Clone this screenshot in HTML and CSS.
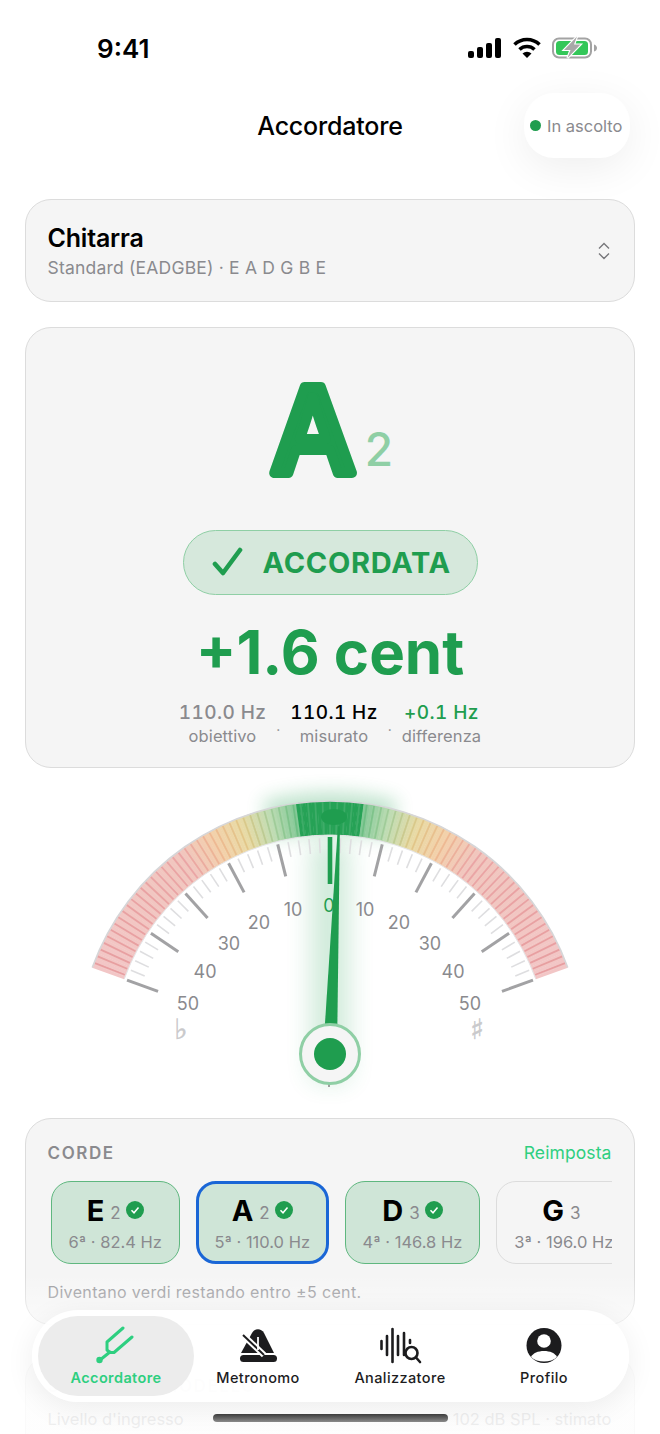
FILE: index.html
```html
<!DOCTYPE html>
<html lang="it">
<head>
	<meta charset="UTF-8">
	<title>Accordatore</title>
	<link rel="stylesheet" href="styles.css">
</head>
<body>
	<div id="phone">
		<div class="statusbar">
			<span class="clock">9:41</span>
			<svg class="status-icons" width="130" height="24" viewBox="468 36 130 24">
				<rect x="468" y="51" width="6" height="7" rx="2" fill="#000"/>
				<rect x="477" y="47" width="6" height="11" rx="2" fill="#000"/>
				<rect x="486" y="43" width="6" height="15" rx="2" fill="#000"/>
				<rect x="495" y="38" width="6" height="20" rx="2" fill="#000"/>
				<path d="M514.5 44.5a18 18 0 0 1 25 0" fill="none" stroke="#000" stroke-width="3.6"/>
				<path d="M519.5 49.5a11 11 0 0 1 15 0" fill="none" stroke="#000" stroke-width="3.6"/>
				<path d="M522.5 53.5a6.5 6.5 0 0 1 9 0L527 58z" fill="#000"/>
				<rect x="553" y="38.5" width="38" height="19" rx="6" fill="none" stroke="#a3a3a3" stroke-width="2"/>
				<rect x="556" y="41" width="32" height="14" rx="3.5" fill="#34c759"/>
				<path d="M594 44.500c2 .5 3 2 3 3.500s-1 3-3 3.500z" fill="#a3a3a3"/>
				<path d="M577 36.500l-13 13.500h6.500l-3 8 13-13.500h-6.500z" fill="#a8a8a8" stroke="#fff" stroke-width="2.200" paint-order="stroke"/>
			</svg>
		</div>

		<div class="topbar">
			<span></span>
			<h1>Accordatore</h1>
			<div class="listening"><i></i>In ascolto</div>
		</div>

		<div class="content">
			<div class="card instrument">
				<div>
					<div class="instrument-name">Chitarra</div>
					<div class="instrument-sub">Standard (EADGBE) · E A D G B E</div>
				</div>
				<svg width="16" height="20" viewBox="0 0 16 20"><path d="M3 7.500L8 2.500l5 5M3 12.500l5 5 5-5" fill="none" stroke="#77777b" stroke-width="1.400"/></svg>
			</div>

			<div class="card reading">
				<svg class="note" width="170" height="155" viewBox="0 0 170 155">
					<text class="note-letter" x="62" y="123.500" text-anchor="middle">A</text>
					<text class="note-octave" x="128" y="117" text-anchor="middle">2</text>
				</svg>
				<div class="badge">
					<svg width="32" height="30" viewBox="0 0 32 30"><path d="M3 17l8 9L28 3" fill="none" stroke="#1f9d4f" stroke-width="4.600" stroke-linecap="round" stroke-linejoin="round"/></svg>
					ACCORDATA
				</div>
				<div class="cents">+1.6 cent</div>
				<div class="freqs">
					<div class="freq"><b>110.0 Hz</b><span>obiettivo</span></div>
					<i>·</i>
					<div class="freq now"><b>110.1 Hz</b><span>misurato</span></div>
					<i>·</i>
					<div class="freq diff"><b>+0.1 Hz</b><span>differenza</span></div>
				</div>
			</div>

			<svg id="gauge" width="610" height="350" viewBox="25 768 610 350">
				<g id="glow"></g>
				<g id="band"></g>
				<g id="ticks"></g>
				<g class="gauge-labels">
					<text x="188" y="1010">50</text><text x="205" y="978">40</text>
					<text x="229" y="950">30</text><text x="259" y="929">20</text>
					<text x="293" y="916">10</text><text class="zero" x="329" y="912">0</text>
					<text x="365" y="916">10</text><text x="399" y="929">20</text>
					<text x="430" y="950">30</text><text x="453" y="978">40</text>
					<text x="470" y="1010">50</text>
					<text class="accidental" x="181" y="1039">♭</text>
					<text class="accidental" x="477" y="1039">♯</text>
				</g>
				<g id="needle"></g>
			</svg>

			<div class="card strings">
				<div class="strings-head">
					<span class="section-title">CORDE</span>
					<span class="reset">Reimposta</span>
				</div>
				<div class="chips">
					<div class="chip done">
						<div class="chip-top"><b>E</b><span>2</span><svg class="tick" width="18" height="18" viewBox="0 0 18 18"><circle cx="9" cy="9" r="9" fill="#1f9d4f"/><path d="M5.500 9.300l2.500 2.500 4.500-5.300" fill="none" stroke="#fff" stroke-width="1.500"/></svg></div>
						<div class="chip-sub">6ª · 82.4 Hz</div>
					</div>
					<div class="chip done active">
						<div class="chip-top"><b>A</b><span>2</span><svg class="tick" width="18" height="18" viewBox="0 0 18 18"><circle cx="9" cy="9" r="9" fill="#1f9d4f"/><path d="M5.500 9.300l2.500 2.500 4.500-5.300" fill="none" stroke="#fff" stroke-width="1.500"/></svg></div>
						<div class="chip-sub">5ª · 110.0 Hz</div>
					</div>
					<div class="chip done">
						<div class="chip-top"><b>D</b><span>3</span><svg class="tick" width="18" height="18" viewBox="0 0 18 18"><circle cx="9" cy="9" r="9" fill="#1f9d4f"/><path d="M5.500 9.300l2.500 2.500 4.500-5.300" fill="none" stroke="#fff" stroke-width="1.500"/></svg></div>
						<div class="chip-sub">4ª · 146.8 Hz</div>
					</div>
					<div class="chip">
						<div class="chip-top"><b>G</b><span>3</span></div>
						<div class="chip-sub">3ª · 196.0 Hz</div>
					</div>
				</div>
				<div class="strings-note">Diventano verdi restando entro ±5 cent.</div>
			</div>

			<div class="card level">
				<div class="section-title">SEGNALE E MODELLO</div>
				<div class="level-row">
					<span>Livello d'ingresso</span>
					<span>≈ 102 dB SPL · stimato</span>
				</div>
			</div>
		</div>

		<div class="fade"></div>

		<div class="tabbar">
			<div class="tab current">
				<svg width="44" height="40" viewBox="96 1326 44 40"><g fill="none" stroke="#2ecf80" stroke-width="3" stroke-linecap="round" stroke-linejoin="round"><path d="M125 1328l-16 14v8l3 2.500 4 0L134 1337"/><path d="M102 1360l10-8"/></g><circle cx="101.500" cy="1360" r="3.200" fill="#2ecf80"/></svg>
				<span>Accordatore</span>
			</div>
			<div class="tab">
				<svg width="44" height="40" viewBox="236 1326 44 40"><path d="M252 1333c3-5 9-5 12 0l10 20h-33z" fill="#1c1c1e"/><rect x="240" y="1355" width="37" height="7" rx="3.500" fill="#1c1c1e"/><path d="M243 1335l21 20" stroke="#fff" stroke-width="6"/><path d="M243 1335l21 20" stroke="#1c1c1e" stroke-width="2"/><path d="M258 1337v13" stroke="#fff" stroke-width="1.800"/></svg>
				<span>Metronomo</span>
			</div>
			<div class="tab">
				<svg width="44" height="40" viewBox="384 1326 44 40"><g fill="none" stroke="#1c1c1e" stroke-width="2.600" stroke-linecap="round"><path d="M387.500 1341v8M393 1336v19M398.500 1329v33M404 1336v19M410 1333v22M416 1340v3"/><circle cx="417.500" cy="1353" r="6"/><path d="M422 1357.500l4 4.500"/></g></svg>
				<span>Analizzatore</span>
			</div>
			<div class="tab">
				<svg width="44" height="40" viewBox="523 1326 44 40"><circle cx="545" cy="1345.500" r="17.500" fill="#1c1c1e"/><circle cx="545" cy="1341" r="6.800" fill="#fff"/><path d="M532 1357c2-4 7-6 13-6s11 2 13 6c-3 3-8 4.500-13 4.500s-10-1.500-13-4.500z" fill="#fff"/></svg>
				<span>Profilo</span>
			</div>
		</div>
		<div class="home-bar"></div>
	</div>
	<script src="gauge.js"></script>
</body>
</html>
```

FILE: styles.css
```css
*{
	margin: 0;
	padding: 0;
	box-sizing: border-box;
}
body{
	background: #fff;
	font-family: Inter, "Noto Sans", sans-serif;
	color: #000;
}
#phone{
	width: 660px;
	height: 1434px;
	position: relative;
	overflow: hidden;
	background: #fff;
}
/*status bar*/
.statusbar{
	height: 93px;
	padding: 36px 62px 0 97px;
	display: flex;
	justify-content: space-between;
	align-items: flex-start;
}
.clock{
	font-size: 26px;
	font-weight: 600;
	line-height: 26px;
}
/*top bar*/
.topbar{
	height: 65px;
	padding: 0 30px;
	display: grid;
	grid-template-columns: 1fr auto 1fr;
	align-items: center;
}
.topbar h1{
	font-size: 25px;
	font-weight: 500;
	letter-spacing: -0.2px;
}
.listening{
	justify-self: end;
	width: 106px;
	height: 65px;
	padding-left: 6px;
	border-radius: 30px;
	background: #fff;
	box-shadow: 0 10px 44px rgba(0,0,0,.07);
	display: flex;
	align-items: center;
	gap: 6px;
	font-size: 16.5px;
	color: #8a8a8e;
	white-space: nowrap;
}
.listening i{
	width: 11px;
	height: 11px;
	border-radius: 50%;
	background: #1f9d4f;
}
/*cards*/
.content{
	padding: 41px 25px 0;
}
.card{
	background: #f5f5f5;
	border: 1.5px solid #dcdcdc;
	border-radius: 26px;
}
.instrument{
	height: 103px;
	padding: 0 22.500px 0 21.500px;
	margin-bottom: 25px;
	display: flex;
	justify-content: space-between;
	align-items: center;
}
.instrument-name{
	font-size: 25px;
	font-weight: 600;
	line-height: 30px;
	letter-spacing: -0.2px;
}
.instrument-sub{
	margin-top: 4px;
	font-size: 17.5px;
	line-height: 22px;
	color: #8a8a8e;
	letter-spacing: .2px;
}
/*reading card*/
.reading{
	height: 441px;
	padding-top: 21px;
	display: flex;
	flex-direction: column;
	align-items: center;
}
.note{
	display: block;
	margin-left: 12px;
}
.note-letter{
	font-family: Inter, sans-serif;
	font-size: 118px;
	font-weight: 500;
	fill: #1f9d4f;
	stroke: #1f9d4f;
	stroke-width: 10px;
	stroke-linejoin: round;
}
.note-octave{
	font-family: Inter, sans-serif;
	font-size: 46px;
	font-weight: 500;
	fill: #8fcfa5;
}
.badge{
	width: 295px;
	height: 65px;
	margin-top: 25.500px;
	padding-left: 28px;
	border: 1.5px solid #8fcfa5;
	border-radius: 33px;
	background: #d6e8dc;
	display: flex;
	align-items: center;
	gap: 19px;
	font-size: 29px;
	font-weight: 700;
	letter-spacing: .7px;
	color: #1f9d4f;
}
.cents{
	margin-top: 22px;
	font-size: 60px;
	line-height: 70px;
	font-weight: 700;
	color: #1f9d4f;
}
.freqs{
	margin-top: 14px;
	display: flex;
	align-items: flex-start;
	gap: 10px;
}
.freqs>i{
	font-style: normal;
	color: #8a8a8e;
	line-height: 58px;
	font-size: 14px;
}
.freq{
	display: flex;
	flex-direction: column;
	align-items: center;
}
.freq b{
	font-size: 19px;
	line-height: 24px;
	font-weight: 500;
	letter-spacing: .4px;
	font-variant-numeric: tabular-nums;
	color: #8a8a8e;
}
.freq span{
	font-size: 16.5px;
	line-height: 22px;
	letter-spacing: .1px;
	color: #8a8a8e;
}
.freq.now b{
	color: #000;
}
.freq.diff b{
	color: #1f9d4f;
}
/*gauge*/
#gauge{
	display: block;
}
.gauge-labels text{
	font-size: 18px;
	fill: #8a8a8e;
	text-anchor: middle;
}
.gauge-labels .zero{
	fill: #1f9d4f;
}
.gauge-labels .accidental{
	font-family: "DejaVu Sans", sans-serif;
	font-size: 28px;
	fill: #c9c9cb;
	stroke: #c9c9cb;
	stroke-width: .5px;
}
.blur-l{
	filter: blur(13px);
}
.blur-m{
	filter: blur(9px);
}
/*strings card*/
.strings{
	height: 207px;
	padding: 20.500px 22.500px 0 21.500px;
	margin-bottom: 30px;
}
.strings-head{
	display: flex;
	justify-content: space-between;
	align-items: center;
	height: 26px;
}
.section-title{
	font-size: 17px;
	font-weight: 600;
	letter-spacing: 1.6px;
	color: #8a8a8e;
}
.reset{
	font-size: 17.5px;
	letter-spacing: .1px;
	color: #2ecf80;
}
.chips{
	margin-top: 15px;
	padding-left: 3px;
	display: flex;
	gap: 16px;
	overflow: hidden;
}
.chip{
	flex-shrink: 0;
	height: 83px;
	padding: 0 17px;
	border: 1.5px solid #dcdcdc;
	border-radius: 20px;
	display: flex;
	flex-direction: column;
	align-items: center;
	justify-content: center;
}
.chip.done{
	background: #cfe5d7;
	border-color: #5fb77f;
}
.chip.active{
	border: 3px solid #1a66d6;
	padding: 0 15.500px;
}
.chip-top{
	display: flex;
	align-items: center;
	height: 40px;
}
.chip-top b{
	font-size: 29px;
	font-weight: 700;
}
.chip-top span{
	margin: 5px 5px 0 6px;
	font-size: 17px;
	color: #8a8a8e;
}
.tick{
	margin-top: -1px;
}
.chip-sub{
	font-size: 16.500px;
	line-height: 24px;
	color: #8a8a8e;
	white-space: nowrap;
}
.strings-note{
	margin-top: 18px;
	font-size: 16px;
	color: #98989c;
	letter-spacing: .35px;
}
/*level card, mostly hidden under the tab bar*/
.level{
	height: 200px;
	padding: 20px 22.500px 20px 21.500px;
}
.level-row{
	margin-top: 13px;
	display: flex;
	justify-content: space-between;
	font-size: 16.5px;
	color: #8a8a8e;
}
/*overlays at the bottom*/
.fade{
	position: absolute;
	left: 0;
	right: 0;
	bottom: 0;
	height: 160px;
	background: linear-gradient(to bottom, rgba(255,255,255,0), rgba(255,255,255,.84) 45%, rgba(255,255,255,.86));
}
.tabbar{
	position: absolute;
	left: 32px;
	top: 1310px;
	width: 597px;
	height: 92px;
	padding: 6px;
	border-radius: 46px;
	background: rgba(255,255,255,.88);
	box-shadow: 0 6px 30px rgba(0,0,0,.07);
	display: grid;
	grid-template-columns: 156px 128px 156px 132px;
}
.tab{
	display: flex;
	flex-direction: column;
	align-items: center;
	justify-content: flex-end;
	padding-bottom: 10px;
	font-size: 14.500px;
	font-weight: 500;
	letter-spacing: .4px;
	color: #1c1c1e;
}
.tab svg{
	margin-bottom: 3px;
}
.tab.current{
	border-radius: 40px;
	background: #ececec;
	color: #2ecf80;
	font-weight: 600;
}
.home-bar{
	position: absolute;
	left: 213px;
	top: 1414px;
	width: 235px;
	height: 8px;
	border-radius: 4px;
	background: linear-gradient(to bottom, #3c3c3c, #8a8a8a);
}
```

FILE: gauge.js
```js
var NS = "http://www.w3.org/2000/svg";
var CX = 330, CY = 1054;
var DEG_PER_CENT = 1.4;

function $(id){
	return document.getElementById(id);
}
function add(parent, tag, attrs){
	var el = document.createElementNS(NS, tag);
	for(var k in attrs){
		el.setAttribute(k, attrs[k]);
	}
	parent.appendChild(el);
	return el;
}
//polar to x,y, angle 0 is straight up
function pt(r, deg){
	var a = deg * Math.PI / 180;
	return (CX + r * Math.sin(a)).toFixed(2) + " " + (CY - r * Math.cos(a)).toFixed(2);
}
function wedge(r1, r2, a1, a2){
	return "M" + pt(r2, a1) + "A" + r2 + " " + r2 + " 0 0 1 " + pt(r2, a2) +
		"L" + pt(r1, a2) + "A" + r1 + " " + r1 + " 0 0 0 " + pt(r1, a1) + "Z";
}
function mix(stops, c){
	for(var i = 1; i < stops.length; i++){
		if(c <= stops[i][0]){
			var a = stops[i-1], b = stops[i];
			var t = (c - a[0]) / (b[0] - a[0] || 1);
			return "rgb(" + [1,2,3].map(function(n){
				return Math.round(a[n] + (b[n] - a[n]) * t);
			}).join(",") + ")";
		}
	}
	var l = stops[stops.length-1];
	return "rgb(" + l[1] + "," + l[2] + "," + l[3] + ")";
}

var BASE = [
	[0, 38,162,86], [5.4, 38,162,86], [5.6, 130,200,150], [10, 190,220,180],
	[15, 232,218,165], [20, 243,208,170], [26, 241,198,190], [50, 242,198,198]
];
var LINE = [
	[0, 62,172,104], [5.4, 62,172,104], [5.6, 105,190,130], [10, 165,205,155],
	[15, 224,200,136], [20, 238,186,146], [26, 234,165,165], [50, 231,158,160]
];

//glow behind the needle and the in-tune zone
add($("glow"), "path", {d: wedge(222, 262, -15, 15), fill: "#1f9d4f", opacity: .28, "class": "blur-m"});
add($("glow"), "rect", {x: 312, y: 840, width: 36, height: 240, fill: "#1f9d4f", opacity: .22, "class": "blur-l"});

//coloured band, one wedge per half cent
var band = $("band");
for(var c = -50; c < 50; c += .5){
	add(band, "path", {
		d: wedge(219, 253, c * DEG_PER_CENT - .05, (c + .5) * DEG_PER_CENT + .05),
		fill: mix(BASE, Math.abs(c + .25))
	});
}
for(var a = -68.88; a < 69; a += 1.68){
	add(band, "path", {
		d: "M" + pt(220, a) + "L" + pt(252, a),
		stroke: mix(LINE, Math.abs(a) / DEG_PER_CENT),
		"stroke-width": 1.8
	});
}
add(band, "path", {
	d: "M" + pt(253, -70) + "A253 253 0 0 1 " + pt(253, 70),
	fill: "none", stroke: "#d6d6d8", "stroke-width": 1.6
});
add(band, "path", {
	d: "M" + pt(219, -70) + "A219 219 0 0 1 " + pt(219, 70),
	fill: "none", stroke: "#e4e4e6", "stroke-width": 1
});

//scale ticks
var ticks = $("ticks");
for(var i = -50; i <= 50; i += 2){
	var deg = i * DEG_PER_CENT;
	if(i === 0){
		add(ticks, "path", {d: "M" + pt(217, 0) + "L" + pt(170, 0), stroke: "#1f9d4f", "stroke-width": 4.6});
	}else if(i % 10 === 0){
		add(ticks, "path", {d: "M" + pt(216, deg) + "L" + pt(183, deg), stroke: "#a2a2a4", "stroke-width": 3});
	}else{
		add(ticks, "path", {d: "M" + pt(216, deg) + "L" + pt(201, deg), stroke: "#dedee0", "stroke-width": 1.6});
	}
}

//needle, +1.6 cent
var needle = $("needle");
add(needle, "ellipse", {cx: 334, cy: 817, rx: 13, ry: 8, fill: "#1f9d4f"});
add(needle, "polygon", {
	points: "323,1054 337,1054 331,826 329,826",
	fill: "#1f9d4f",
	transform: "rotate(" + (1.6 * DEG_PER_CENT) + " " + CX + " " + CY + ")"
});
add(needle, "path", {d: "M329 1084v3", stroke: "#4b4b4b", "stroke-width": 1});
add(needle, "circle", {cx: CX, cy: CY, r: 29.5, fill: "#f5f5f5", stroke: "#8fcfa5", "stroke-width": 3});
add(needle, "circle", {cx: CX, cy: CY, r: 16, fill: "#1f9d4f"});
```
